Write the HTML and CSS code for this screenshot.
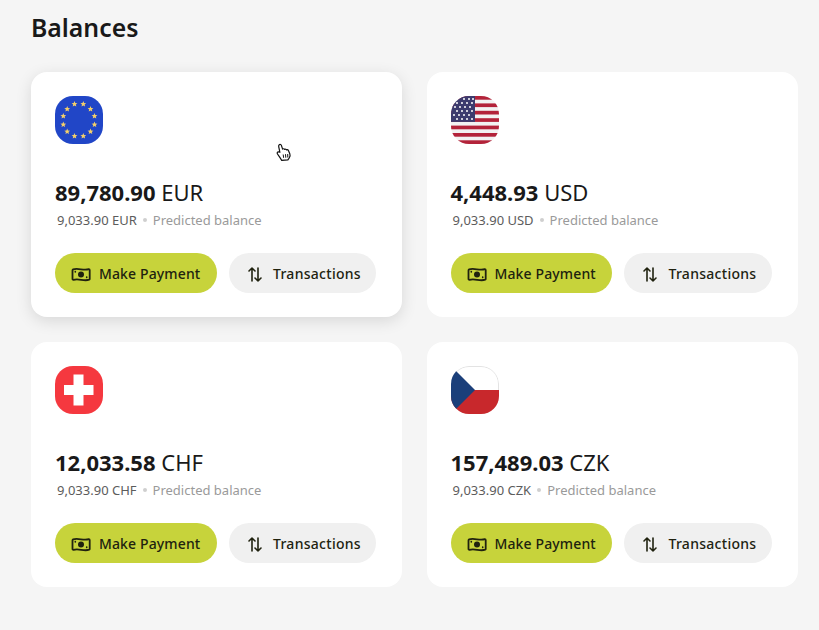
FILE: index.html
```html
<!DOCTYPE html>
<html lang="en">
<head>
<meta charset="utf-8">
<title>Balances</title>
<link rel="stylesheet" href="styles.css">
</head>
<body>
<svg class="defs" width="0" height="0" aria-hidden="true">
  <defs>
    <g id="money">
      <path d="M2.200 5.400c5-2 10.200 1.800 15.600-.2.500 0 .9.300.9.800v9c0 .3-.2.600-.5.700-5.400 2.100-10.600-1.900-15.800.2-.500 0-.9-.3-.9-.8V6.200c0-.3.300-.6.700-.8z" fill="none" stroke="currentColor" stroke-width="1.800" stroke-linejoin="round"/>
      <circle cx="10" cy="10.500" r="3" fill="currentColor"/>
      <path d="M4.300 7.700v.1M15.700 13.200v.1" stroke="currentColor" stroke-width="1.700" stroke-linecap="round"/>
    </g>
    <g id="swap" fill="none" stroke="currentColor" stroke-width="1.600" stroke-linecap="round" stroke-linejoin="round">
      <path d="M7 17V4M4 7l3-3 3 3"/>
      <path d="M13 4v13M10 14l3 3 3-3"/>
    </g>
    <path id="star" d="M0-2.900.8-.9 2.900-.8 1.300.5 1.800 2.600 0 1.400-1.800 2.600-1.300.5-2.900-.8-.8-.9z" fill="#f3cf6a"/>
  </defs>
</svg>
<main class="page">
  <h1 class="title">Balances</h1>
  <section class="grid">
    <article class="card card-hover">
      <div class="flag">
        <svg viewBox="0 0 48 48" width="48" height="48">
          <rect width="48" height="48" fill="#2146c7"/>
          <use href="#star" x="19.500" y="8"/><use href="#star" x="28.300" y="8"/>
          <use href="#star" x="12.200" y="13"/><use href="#star" x="35.500" y="13"/>
          <use href="#star" x="8.300" y="20"/><use href="#star" x="39.500" y="20"/>
          <use href="#star" x="8.300" y="28.500"/><use href="#star" x="39.500" y="28.500"/>
          <use href="#star" x="12.200" y="35.500"/><use href="#star" x="35.500" y="35.500"/>
          <use href="#star" x="19.500" y="40"/><use href="#star" x="28.300" y="40"/>
        </svg>
      </div>
      <p class="amount"><strong>89,780.90</strong> EUR</p>
      <p class="sub"><span>9,033.90 EUR</span><i class="dot"></i><span class="muted">Predicted balance</span></p>
      <div class="actions">
        <button class="btn btn-primary"><svg class="ico" viewBox="0 0 20 20"><use href="#money"/></svg>Make Payment</button>
        <button class="btn btn-secondary"><svg class="ico" viewBox="0 0 20 20"><use href="#swap"/></svg>Transactions</button>
      </div>
      <svg class="cursor" viewBox="0 0 16 19" width="16" height="19">
        <path d="M3.200 1.800c.8-.7 1.900-.3 2.200.6l1.200 3.700c.7-.6 1.700-.4 2.100.3.600-.4 1.500-.2 1.900.5.700-.3 1.500 0 1.800.6l1.400 3.200c.6 1.500.3 3-.6 4.300l-1.300 1.900-6.200.4-1.700-2.600L1.500 11c-.7-1-.2-2.100 1-2.200l1.400.5-1.200-5.700c-.1-.7 0-1.400.5-1.800z" fill="#fff" stroke="#111" stroke-width="1.200" stroke-linejoin="round"/>
        <path d="M7.200 11.500l.4 3.300M9.500 11.200l.3 3.500M11.700 11l.1 3.500" stroke="#111" stroke-width="1"/>
      </svg>
    </article>
    <article class="card">
      <div class="flag">
        <svg viewBox="0 0 48 48" width="48" height="48">
          <rect width="48" height="48" fill="#f2f2f2"/>
          <g fill="#b3233a">
            <rect y="0" width="48" height="3.700"/><rect y="7.400" width="48" height="3.700"/><rect y="14.800" width="48" height="3.700"/><rect y="22.200" width="48" height="3.700"/><rect y="29.600" width="48" height="3.700"/><rect y="37" width="48" height="3.700"/><rect y="44.300" width="48" height="3.700"/>
          </g>
          <rect width="24" height="25.900" fill="#3c3b6e"/>
          <g fill="#fff">
            <circle cx="13" cy="3" r="1"/><circle cx="18" cy="3" r="1"/><circle cx="22" cy="3" r="1"/>
            <circle cx="6" cy="7" r="1"/><circle cx="11" cy="7" r="1"/><circle cx="16" cy="7" r="1"/><circle cx="21" cy="7" r="1"/>
            <circle cx="4" cy="11" r="1"/><circle cx="9" cy="11" r="1"/><circle cx="14" cy="11" r="1"/><circle cx="19" cy="11" r="1"/>
            <circle cx="6" cy="15" r="1"/><circle cx="11" cy="15" r="1"/><circle cx="16" cy="15" r="1"/><circle cx="21" cy="15" r="1"/>
            <circle cx="3" cy="19" r="1"/><circle cx="8" cy="19" r="1"/><circle cx="13" cy="19" r="1"/><circle cx="18" cy="19" r="1"/>
            <circle cx="6" cy="23" r="1"/><circle cx="11" cy="23" r="1"/><circle cx="16" cy="23" r="1"/><circle cx="21" cy="23" r="1"/>
          </g>
        </svg>
      </div>
      <p class="amount"><strong>4,448.93</strong> USD</p>
      <p class="sub"><span>9,033.90 USD</span><i class="dot"></i><span class="muted">Predicted balance</span></p>
      <div class="actions">
        <button class="btn btn-primary"><svg class="ico" viewBox="0 0 20 20"><use href="#money"/></svg>Make Payment</button>
        <button class="btn btn-secondary"><svg class="ico" viewBox="0 0 20 20"><use href="#swap"/></svg>Transactions</button>
      </div>
    </article>
    <article class="card">
      <div class="flag">
        <svg viewBox="0 0 48 48" width="48" height="48">
          <rect width="48" height="48" fill="#f5383f"/>
          <path d="M18.500 8.500h10v10.500h10v10h-10v10.500h-10V29H9V19h9.500z" fill="#fff"/>
        </svg>
      </div>
      <p class="amount"><strong>12,033.58</strong> CHF</p>
      <p class="sub"><span>9,033.90 CHF</span><i class="dot"></i><span class="muted">Predicted balance</span></p>
      <div class="actions">
        <button class="btn btn-primary"><svg class="ico" viewBox="0 0 20 20"><use href="#money"/></svg>Make Payment</button>
        <button class="btn btn-secondary"><svg class="ico" viewBox="0 0 20 20"><use href="#swap"/></svg>Transactions</button>
      </div>
    </article>
    <article class="card">
      <div class="flag">
        <svg viewBox="0 0 48 48" width="48" height="48">
          <rect width="48" height="48" fill="#fff"/>
          <rect x=".5" y=".5" width="47" height="47" rx="17.500" fill="none" stroke="#e3e3e3"/>
          <rect y="24" width="48" height="24" fill="#c8282c"/>
          <path d="M0 0l24 24L0 48z" fill="#1b3f7a"/>
        </svg>
      </div>
      <p class="amount"><strong>157,489.03</strong> CZK</p>
      <p class="sub"><span>9,033.90 CZK</span><i class="dot"></i><span class="muted">Predicted balance</span></p>
      <div class="actions">
        <button class="btn btn-primary"><svg class="ico" viewBox="0 0 20 20"><use href="#money"/></svg>Make Payment</button>
        <button class="btn btn-secondary"><svg class="ico" viewBox="0 0 20 20"><use href="#swap"/></svg>Transactions</button>
      </div>
    </article>
  </section>
</main>
</body>
</html>
```
FILE: styles.css
```css
* { box-sizing: border-box; }
html, body { margin: 0; height: 100%; }
body {
  background: #f5f5f5;
  color: #191919;
  font-family: "Noto Sans", "Open Sans", sans-serif;
  overflow: hidden;
}
.defs { position: absolute; }
.page { padding: 10px 21px 0 31px; }
.title {
  margin: 0 0 27.500px;
  font-size: 24.800px;
  line-height: 34px;
  font-weight: 600;
}
.grid {
  display: grid;
  grid-template-columns: 371px 371px;
  grid-auto-rows: 245px;
  column-gap: 24.500px;
  row-gap: 25px;
}
.card {
  position: relative;
  background: #fff;
  border-radius: 16px;
  padding: 24.500px 24px 0;
  display: flex;
  flex-direction: column;
}
.card-hover { box-shadow: 0 4px 16px rgba(0, 0, 0, .12); }
.flag {
  width: 48px;
  height: 48px;
  border-radius: 18px;
  overflow: hidden;
}
.flag svg { display: block; }
.amount {
  margin: 33px 0 0;
  font-size: 22px;
  line-height: 30px;
}
.amount strong { font-weight: 700; }
.sub {
  margin: 3px 0 0 2px;
  display: flex;
  align-items: center;
  font-size: 13px;
  line-height: 20px;
  color: #5c5c5c;
}
.muted { color: #9a9a9a; }
.dot {
  width: 4px;
  height: 4px;
  margin: 0 6px;
  border-radius: 50%;
  background: #cfcfcf;
}
.actions {
  display: flex;
  gap: 12px;
  margin-top: 23px;
}
.btn {
  height: 40px;
  border: 0;
  border-radius: 20px;
  display: flex;
  align-items: center;
  gap: 8px;
  font: 500 14px/20px "Noto Sans", "Open Sans", sans-serif;
  letter-spacing: .13px;
  color: #20220f;
  padding: 1px 16px 0;
}
.btn-primary { background: #c7d33b; width: 161.500px; }
.btn-secondary { background: #f0f0f0; width: 147.500px; gap: 8.500px; letter-spacing: .28px; }
.ico { width: 20px; height: 20px; flex: none; }
.cursor {
  position: absolute;
  left: 245px;
  top: 71.500px;
}
```
